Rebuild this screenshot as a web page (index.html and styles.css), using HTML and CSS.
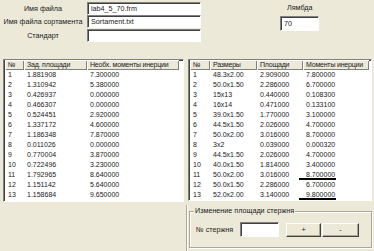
FILE: index.html
```html
<!DOCTYPE html>
<html lang="ru">
<head>
    <meta charset="UTF-8">
    <title>lab4</title>
    <link rel="stylesheet" href="styles.css">
</head>
<body>
    <div class="form">
        <div class="top">
            <div class="fields">
                <label class="cap">Имя файла</label>
                <input class="edit" value="lab4_5_70.frm">
                <label class="cap">Имя файла сортамента</label>
                <input class="edit" value="Sortament.txt">
                <label class="cap">Стандарт</label>
                <input class="edit" value="">
            </div>
            <div class="lambda">
                <div class="lambda-cap">Лямбда</div>
                <input class="edit lambda-edit" value="70">
            </div>
        </div>

        <div class="lists">
            <div class="list list-left">
                <table>
                    <tr>
                        <th class="w-no">№</th>
                        <th class="w-area">Зад. площади</th>
                        <th class="w-need">Необх. моменты инерции</th>
                    </tr>
                    <tr><td>1</td><td>1.881908</td><td>7.300000</td></tr>
                    <tr><td>2</td><td>1.310942</td><td>5.380000</td></tr>
                    <tr><td>3</td><td>0.426937</td><td>0.000000</td></tr>
                    <tr><td>4</td><td>0.466307</td><td>0.000000</td></tr>
                    <tr><td>5</td><td>0.524451</td><td>2.920000</td></tr>
                    <tr><td>6</td><td>1.337172</td><td>4.600000</td></tr>
                    <tr><td>7</td><td>1.186348</td><td>7.870000</td></tr>
                    <tr><td>8</td><td>0.011026</td><td>0.000000</td></tr>
                    <tr><td>9</td><td>0.770004</td><td>3.870000</td></tr>
                    <tr><td>10</td><td>0.722496</td><td>3.230000</td></tr>
                    <tr><td>11</td><td>1.792965</td><td>8.640000</td></tr>
                    <tr><td>12</td><td>1.151142</td><td>5.640000</td></tr>
                    <tr><td>13</td><td>1.158684</td><td>9.650000</td></tr>
                </table>
            </div>
            <div class="list list-right">
                <table>
                    <tr>
                        <th class="w-no2">№</th>
                        <th class="w-size">Размеры</th>
                        <th class="w-sq">Площади</th>
                        <th class="w-mom">Моменты инерции</th>
                    </tr>
                    <tr><td>1</td><td>48.3x2.00</td><td>2.909000</td><td>7.800000</td></tr>
                    <tr><td>2</td><td>50.0x1.50</td><td>2.286000</td><td>6.700000</td></tr>
                    <tr><td>3</td><td>15x13</td><td>0.440000</td><td>0.108300</td></tr>
                    <tr><td>4</td><td>16x14</td><td>0.471000</td><td>0.133100</td></tr>
                    <tr><td>5</td><td>39.0x1.50</td><td>1.770000</td><td>3.100000</td></tr>
                    <tr><td>6</td><td>44.5x1.50</td><td>2.026000</td><td>4.700000</td></tr>
                    <tr><td>7</td><td>50.0x2.00</td><td>3.016000</td><td>8.700000</td></tr>
                    <tr><td>8</td><td>3x2</td><td>0.039000</td><td>0.000320</td></tr>
                    <tr><td>9</td><td>44.5x1.50</td><td>2.026000</td><td>4.700000</td></tr>
                    <tr><td>10</td><td>40.0x1.50</td><td>1.814000</td><td>3.400000</td></tr>
                    <tr><td>11</td><td>50.0x2.00</td><td>3.016000</td><td><span class="mark">8.700000</span></td></tr>
                    <tr><td>12</td><td>50.0x1.50</td><td>2.286000</td><td>6.700000</td></tr>
                    <tr><td>13</td><td>52.0x2.00</td><td>3.140000</td><td><span class="mark">9.800000</span></td></tr>
                </table>
            </div>
        </div>

        <div class="bottom">
            <div class="panel">
                <fieldset class="group">
                    <legend>Изменение площади стержня</legend>
                    <div class="group-row">
                        <span class="cap-no">№ стержня</span>
                        <input class="edit rod-edit" value="">
                        <button class="btn btn-plus">+</button>
                        <button class="btn btn-minus">-</button>
                    </div>
                </fieldset>
            </div>
        </div>
    </div>
</body>
</html>
```

FILE: styles.css
```css
*{
    margin: 0;
    padding: 0;
    box-sizing: border-box;
}
body{
    width: 374px;
    height: 251px;
    overflow: hidden;
    background: #ece9d8;
    font-family: "Liberation Sans", Arial, sans-serif;
    font-size: 7.2px;
    color: #1a1a1a;
    white-space: nowrap;
}
.top{
    display: flex;
    height: 59px;
}
.fields{
    display: grid;
    grid-template-columns: 80px 114px;
    grid-template-rows: 13px 14px 13px;
    column-gap: 4px;
    padding: 2px 0 0 3px;
}
.cap{
    text-align: center;
    line-height: 13px;
}
.edit{
    height: 13px;
    background: #fff;
    border: 1px solid;
    border-color: #808080 #fff #fff #808080;
    box-shadow: inset 1px 1px 0 #404040;
    font-family: "Liberation Sans", Arial, sans-serif;
    font-size: 7.2px;
    color: #1a1a1a;
    padding: 0 3px;
    outline: none;
}
.lambda{
    margin-left: 79px;
    padding-top: 3px;
    width: 39px;
}
.lambda-cap{
    line-height: 10px;
    padding-left: 7px;
}
.lambda-edit{
    width: 39px;
    height: 15px;
    margin-top: 3px;
}
.lists{
    display: flex;
    gap: 4px;
    padding-left: 3px;
    font-size: 7px;
}
.list{
    height: 143px;
    background: #fff;
    border: 1px solid;
    border-color: #808080 #fff #fff #808080;
    box-shadow: inset 1px 1px 0 #404040;
    padding-left: 1px;
    overflow: hidden;
}
.list-left{
    width: 181px;
}
.list-right{
    width: 184px;
    height: 142px;
}
table{
    border-collapse: collapse;
    table-layout: fixed;
}
th{
    height: 10px;
    line-height: 10px;
    font-weight: normal;
    text-align: left;
    padding-left: 3px;
    letter-spacing: -0.2px;
    background: #ece9d8;
    box-shadow: inset 1px 1px 0 #fff, inset -1px -1px 0 #808080;
    overflow: hidden;
}
td{
    height: 10px;
    line-height: 10px;
    padding-left: 3px;
}
.w-no{ width: 19px; }
.w-area{ width: 63px; }
.w-need{ width: 92px; }
.w-no2{ width: 20px; }
.w-size{ width: 47px; }
.w-sq{ width: 46px; }
.w-mom{ width: 66px; }
.mark{
    display: inline-block;
    vertical-align: top;
    line-height: 7px;
    padding: 1px 1px 0 7px;
    margin-left: -7px;
    border-bottom: 2px solid #000;
}
.bottom{
    display: flex;
    justify-content: flex-end;
}
.panel{
    width: 188px;
    height: 49px;
    margin-top: 3px;
    border-left: 1px solid #aca899;
    box-shadow: inset 1px 0 0 #fff;
    padding: 1px 0 0 2px;
}
.group{
    width: 183px;
    height: 42px;
    border: 1px solid #aca899;
    box-shadow: inset 1px 1px 0 #fff, 1px 1px 0 #fff;
    padding: 6px 6px 0 6px;
}
.group legend{
    line-height: 10px;
    padding: 0 1px;
    margin-left: -2px;
    background: #ece9d8;
}
.group-row{
    display: flex;
    align-items: center;
    height: 15px;
}
.cap-no{
    width: 44px;
}
.rod-edit{
    width: 39px;
    height: 15px;
}
.btn{
    height: 14px;
    background: #ece9d8;
    border: 1px solid;
    border-color: #fff #404040 #404040 #fff;
    box-shadow: inset -1px -1px 0 #aca899;
    font-family: "Liberation Sans", Arial, sans-serif;
    font-size: 7.2px;
    color: #1a1a1a;
}
.btn-plus{
    width: 35px;
    margin-left: 7px;
}
.btn-minus{
    width: 37px;
    margin-left: 1px;
}
```
